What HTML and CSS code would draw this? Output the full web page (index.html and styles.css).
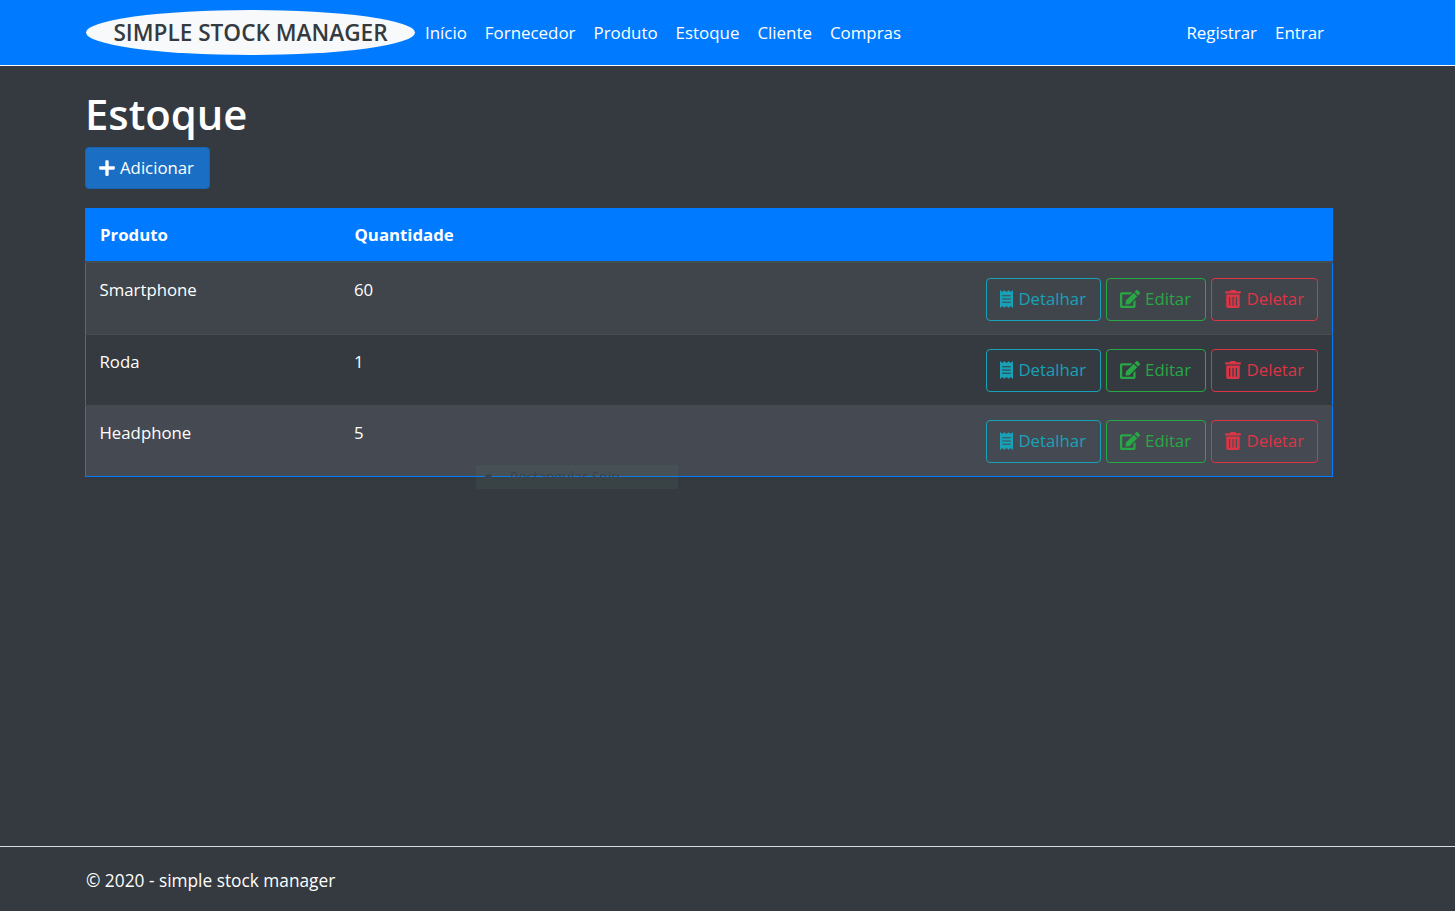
FILE: index.html

```html
<!DOCTYPE html>
<html lang="pt-BR">
<head>
  <meta charset="UTF-8" />
  <meta name="viewport" content="width=device-width, initial-scale=1.0"/>
  <title>Estoque - Simple Stock Manager</title>
  <link rel="stylesheet" href="styles.css">
</head>
<body>
  <svg class="sprite" xmlns="http://www.w3.org/2000/svg">
    <symbol id="i-plus" viewBox="0 0 448 512"><path d="M416 208H272V64c0-17.67-14.33-32-32-32h-32c-17.67 0-32 14.33-32 32v144H32c-17.67 0-32 14.33-32 32v32c0 17.67 14.33 32 32 32h144v144c0 17.67 14.33 32 32 32h32c17.67 0 32-14.33 32-32V304h144c17.67 0 32-14.33 32-32v-32c0-17.67-14.33-32-32-32z"/></symbol>
    <symbol id="i-receipt" viewBox="0 0 384 512"><path d="M358.4 3.2L320 48 265.6 3.2a15.9 15.9 0 0 0-19.2 0L192 48 137.6 3.2a15.9 15.9 0 0 0-19.2 0L64 48 25.6 3.2C15-4.7 0 2.8 0 16v480c0 13.2 15 20.7 25.6 12.8L64 464l54.4 44.8a15.9 15.9 0 0 0 19.2 0L192 464l54.4 44.8a15.9 15.9 0 0 0 19.2 0L320 464l38.4 44.8c10.5 7.9 25.6.4 25.6-12.8V16c0-13.2-15-20.7-25.6-12.8zM320 360c0 4.4-3.6 8-8 8H72c-4.4 0-8-3.6-8-8v-16c0-4.4 3.6-8 8-8h240c4.4 0 8 3.6 8 8v16zm0-96c0 4.4-3.6 8-8 8H72c-4.4 0-8-3.6-8-8v-16c0-4.4 3.6-8 8-8h240c4.4 0 8 3.6 8 8v16zm0-96c0 4.4-3.6 8-8 8H72c-4.4 0-8-3.6-8-8v-16c0-4.4 3.6-8 8-8h240c4.4 0 8 3.6 8 8v16z"/></symbol>
    <symbol id="i-edit" viewBox="0 0 576 512"><path d="M402.6 83.2l90.2 90.2c3.8 3.8 3.8 10 0 13.8L274.4 405.6l-92.8 10.3c-12.4 1.4-22.9-9.1-21.5-21.5l10.3-92.8L388.8 83.2c3.8-3.8 10-3.8 13.8 0zm162-22.9l-48.8-48.8c-15.2-15.2-39.9-15.2-55.2 0l-35.4 35.4c-3.8 3.8-3.8 10 0 13.8l90.2 90.2c3.8 3.8 10 3.8 13.8 0l35.4-35.4c15.2-15.3 15.2-40 0-55.2zM384 346.2V448H64V128h229.8c3.2 0 6.2-1.3 8.5-3.5l40-40c7.6-7.6 2.2-20.5-8.5-20.5H48C21.5 64 0 85.5 0 112v352c0 26.5 21.5 48 48 48h352c26.5 0 48-21.5 48-48V306.2c0-10.7-12.9-16-20.5-8.5l-40 40c-2.2 2.3-3.5 5.3-3.5 8.5z"/></symbol>
    <symbol id="i-trash" viewBox="0 0 448 512"><path d="M32 464a48 48 0 0 0 48 48h288a48 48 0 0 0 48-48V128H32zm272-256a16 16 0 0 1 32 0v224a16 16 0 0 1-32 0zm-96 0a16 16 0 0 1 32 0v224a16 16 0 0 1-32 0zm-96 0a16 16 0 0 1 32 0v224a16 16 0 0 1-32 0zM432 32H312l-9.4-18.7A24 24 0 0 0 281.1 0H166.8a23.72 23.72 0 0 0-21.4 13.3L136 32H16A16 16 0 0 0 0 48v32a16 16 0 0 0 16 16h416a16 16 0 0 0 16-16V48a16 16 0 0 0-16-16z"/></symbol>
  </svg>

  <nav class="navbar">
    <a class="brand" href="#">SIMPLE STOCK MANAGER</a>
    <ul class="nav-links">
      <li><a href="#">Início</a></li>
      <li><a href="#">Fornecedor</a></li>
      <li><a href="#">Produto</a></li>
      <li><a href="#">Estoque</a></li>
      <li><a href="#">Cliente</a></li>
      <li><a href="#">Compras</a></li>
    </ul>
    <ul class="nav-links nav-right">
      <li><a href="#">Registrar</a></li>
      <li><a href="#">Entrar</a></li>
    </ul>
  </nav>

  <main class="content">
    <h1>Estoque</h1>
    <a class="btn btn-add" href="#"><svg class="icon icon-plus"><use href="#i-plus"/></svg>Adicionar</a>

    <table class="stock-table">
      <thead>
        <tr>
          <th class="col-name">Produto</th>
          <th>Quantidade</th>
          <th></th>
        </tr>
      </thead>
      <tbody>
        <tr>
          <td>Smartphone</td>
          <td>60</td>
          <td class="actions">
            <div class="action-group">
              <a class="btn btn-info" href="#"><svg class="icon icon-receipt"><use href="#i-receipt"/></svg>Detalhar</a>
              <a class="btn btn-edit" href="#"><svg class="icon icon-edit"><use href="#i-edit"/></svg>Editar</a>
              <a class="btn btn-del" href="#"><svg class="icon icon-trash"><use href="#i-trash"/></svg>Deletar</a>
            </div>
          </td>
        </tr>
        <tr>
          <td>Roda</td>
          <td>1</td>
          <td class="actions">
            <div class="action-group">
              <a class="btn btn-info" href="#"><svg class="icon icon-receipt"><use href="#i-receipt"/></svg>Detalhar</a>
              <a class="btn btn-edit" href="#"><svg class="icon icon-edit"><use href="#i-edit"/></svg>Editar</a>
              <a class="btn btn-del" href="#"><svg class="icon icon-trash"><use href="#i-trash"/></svg>Deletar</a>
            </div>
          </td>
        </tr>
        <tr>
          <td>Headphone</td>
          <td>5</td>
          <td class="actions">
            <div class="action-group">
              <a class="btn btn-info" href="#"><svg class="icon icon-receipt"><use href="#i-receipt"/></svg>Detalhar</a>
              <a class="btn btn-edit" href="#"><svg class="icon icon-edit"><use href="#i-edit"/></svg>Editar</a>
              <a class="btn btn-del" href="#"><svg class="icon icon-trash"><use href="#i-trash"/></svg>Deletar</a>
            </div>
          </td>
        </tr>
      </tbody>
    </table>
    <div class="snip-hint"><span class="snip-dot"></span>Rectangular Snip</div>
  </main>

  <footer class="footer">© 2020 - simple stock manager</footer>
</body>
</html>
```

FILE: styles.css

```css
* {
  box-sizing: border-box;
}
html, body {
  height: 100%;
}
body {
  margin: 0;
  display: flex;
  flex-direction: column;
  font-family: "Open Sans", "Noto Sans", sans-serif;
  font-size: 16.8px;
  line-height: 26px;
  background: #343a40;
  color: #fff;
}
a {
  color: inherit;
  text-decoration: none;
}
.sprite {
  position: absolute;
  width: 0;
  height: 0;
}
.navbar {
  display: flex;
  align-items: center;
  height: 66px;
  padding: 0 122px 0 86px;
  background: #007bff;
  border-bottom: 1px solid #f8f9fa;
}
.brand {
  width: 329px;
  height: 45px;
  line-height: 45px;
  margin-right: 1px;
  text-align: center;
  font-size: 22.6px;
  font-weight: 600;
  color: #343a40;
  background: #f8f9fa;
  border-radius: 50%;
}
.nav-links {
  display: flex;
  margin: 0;
  padding: 0;
  font-size: 16.9px;
  list-style: none;
}
.nav-links a {
  display: block;
  padding: 0 9px;
}
.nav-right {
  margin-left: auto;
}
.content {
  flex: 1;
  position: relative;
  width: 1248px;
  margin-left: 85px;
  padding-top: 21px;
}
h1 {
  margin: 0 0 6px;
  font-size: 41.8px;
  line-height: 54px;
  font-weight: 600;
}
.btn {
  display: inline-flex;
  align-items: center;
  height: 43px;
  padding: 0 13.5px 2px;
  border: 1px solid;
  border-radius: 4px;
}
.icon {
  fill: currentColor;
  height: 18px;
  margin-right: 5px;
}
.icon-plus {
  width: 16px;
}
.icon-receipt {
  width: 13px;
}
.icon-edit {
  width: 20px;
}
.icon-trash {
  width: 16px;
  margin-right: 6px;
}
.btn-add {
  height: 42px;
  padding: 0 15px 0 13px;
  background: #1a6fc4;
  border-color: #1864b0;
}
.stock-table {
  width: 100%;
  margin-top: 19px;
  border-collapse: collapse;
  border: 1px solid #007bff;
  border-top: 0;
}
.stock-table th {
  height: 54px;
  padding: 0 14px;
  text-align: left;
  font-weight: 700;
  background: #007bff;
  border-bottom: 2px solid #454d55;
}
.col-name {
  width: 255px;
}
.stock-table td {
  padding: 14px 14px 13px 13.5px;
  vertical-align: top;
  border-top: 1px solid #454d55;
}
.stock-table tbody tr:first-child .actions {
  padding-top: 15px;
}
.stock-table tbody tr:nth-child(odd) {
  background: #40454c;
}
.stock-table tbody tr:nth-child(3) {
  background: #454a52;
}
.stock-table tbody tr:nth-child(3) td {
  border-top-color: #454a52;
}
.actions {
  width: 360px;
}
.action-group {
  display: flex;
  justify-content: flex-end;
  gap: 5px;
}
.btn-info {
  color: #17a2b8;
}
.btn-edit {
  color: #28a745;
}
.btn-del {
  padding: 0 13px 2px;
  color: #dc3545;
}
/* left over from the screenshot tool, sits faintly on top of the table */
.snip-hint {
  position: absolute;
  left: 391px;
  top: 399px;
  display: flex;
  align-items: center;
  width: 202px;
  height: 24px;
  padding-left: 9px;
  font-size: 14px;
  color: #3c444b;
  background: rgba(90, 120, 105, 0.15);
}
.snip-dot {
  width: 7px;
  height: 7px;
  margin-right: 18px;
  border-radius: 50%;
  background: #3c444b;
}
.footer {
  height: 65px;
  padding: 0 86px;
  font-size: 17.3px;
  line-height: 68px;
  border-top: 1px solid #d8dadc;
}
```
